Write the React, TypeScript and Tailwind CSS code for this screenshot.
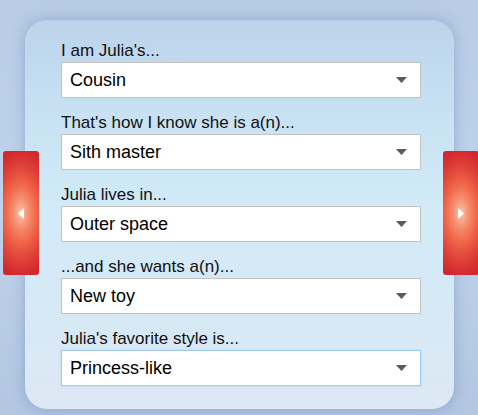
import React from 'react';

const fields = [
  { label: "I am Julia's...", value: 'Cousin' },
  { label: "That's how I know she is a(n)...", value: 'Sith master' },
  { label: 'Julia lives in...', value: 'Outer space' },
  { label: '...and she wants a(n)...', value: 'New toy' },
  { label: "Julia's favorite style is...", value: 'Princess-like', focused: true },
];

const Caret = () => (
  <svg width="11" height="6" viewBox="0 0 11 6" className="ml-auto">
    <path d="M0 0 H11 L5.5 6 Z" fill="#5b5b5b" />
  </svg>
);

const SideButton = ({ dir }: { dir: 'left' | 'right' }) => (
  <button
    className={`absolute top-[151px] flex h-[124px] w-9 items-center justify-center rounded-[3px] bg-[radial-gradient(ellipse_34px_64px_at_center,#fcc2aa_0%,#f58a6a_25%,#ef6045_50%,#e0443a_72%,#d2272d_100%)] ${
      dir === 'left' ? 'left-[3px]' : 'left-[443px]'
    }`}
  >
    <svg width="6" height="11" viewBox="0 0 6 11">
      {dir === 'left' ? (
        <path d="M6 0 V11 L0 5.5 Z" fill="#fff" />
      ) : (
        <path d="M0 0 V11 L6 5.5 Z" fill="#fff" />
      )}
    </svg>
  </button>
);

export default function App() {
  return (
    <div className="relative h-[415px] w-[478px] overflow-hidden bg-[linear-gradient(180deg,#b8cce6_0%,#bed3ea_50%,#b2c6e2_100%)] font-['Liberation_Sans',Arial,sans-serif]">
      <div className="pl-[25px] pt-5">
        <div className="w-[429px] rounded-[22px] bg-[linear-gradient(180deg,#bcd3eb_0%,#c8e2f3_25%,#d2ebf7_50%,#d6e9f5_75%,#dde8f4_100%)] pb-[23px] pl-9 pt-5 shadow-[0_0_14px_rgba(70,100,160,0.35)]">
          <div className="flex flex-col gap-[14px]">
            {fields.map((f) => (
              <div key={f.label}>
                <div className="text-[17px] leading-[22px] text-[#111]">{f.label}</div>
                <div
                  className={`flex h-9 w-[360px] items-center border bg-white pl-2 pr-[13px] text-[18px] text-black ${
                    f.focused ? 'border-[#9fcbee] shadow-[0_0_2px_#b6d8f4]' : 'border-[#c2c2c2]'
                  }`}
                >
                  <span>{f.value}</span>
                  <Caret />
                </div>
              </div>
            ))}
          </div>
        </div>
      </div>
      <SideButton dir="left" />
      <SideButton dir="right" />
    </div>
  );
}
